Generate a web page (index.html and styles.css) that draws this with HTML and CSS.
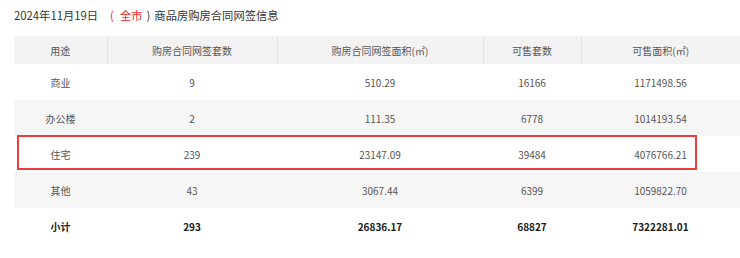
FILE: index.html
```html
<!DOCTYPE html>
<html lang="zh-CN">
<head>
<meta charset="utf-8">
<title>商品房购房合同网签信息</title>
<link rel="stylesheet" href="styles.css">
</head>
<body>
<div class="title">2024年11月19日<span class="paren-l red">(</span><span class="red">全市</span><span class="paren-r">)</span>商品房购房合同网签信息</div>
<div class="wrap">
<table class="grid">
<colgroup>
<col class="c1"><col class="c2"><col class="c3"><col class="c4"><col class="c5">
</colgroup>
<thead>
<tr><th>用途</th><th>购房合同网签套数</th><th>购房合同网签面积(㎡)</th><th>可售套数</th><th>可售面积(㎡)</th></tr>
</thead>
<tbody>
<tr><td>商业</td><td>9</td><td>510.29</td><td>16166</td><td>1171498.56</td></tr>
<tr class="alt"><td>办公楼</td><td>2</td><td>111.35</td><td>6778</td><td>1014193.54</td></tr>
<tr><td>住宅</td><td>239</td><td>23147.09</td><td>39484</td><td>4076766.21</td></tr>
<tr class="alt"><td>其他</td><td>43</td><td>3067.44</td><td>6399</td><td>1059822.70</td></tr>
<tr class="total"><td>小计</td><td>293</td><td>26836.17</td><td>68827</td><td>7322281.01</td></tr>
</tbody>
</table>
<div class="highlight"></div>
</div>
</body>
</html>
```
FILE: styles.css
```css
html, body {
  margin: 0;
  padding: 0;
  background: #ffffff;
}
body {
  font-family: "Noto Sans CJK SC", "Noto Sans", sans-serif;
  color: #333333;
}
.title {
  height: 30px;
  line-height: 30px;
  padding-left: 14px;
  font-size: 11.3px;
  color: #333333;
  white-space: nowrap;
}
.paren-l {
  margin-left: 12px;
  margin-right: 6px;
}
.paren-r {
  margin-left: 4px;
  margin-right: 4px;
}
.red {
  color: #f21c1c;
}
.wrap {
  position: relative;
  margin-top: 6px;
  margin-left: 14px;
  width: 726px;
}
.grid {
  width: 726px;
  table-layout: fixed;
  border-collapse: collapse;
  font-size: 10px;
  color: #555555;
}
.c1 { width: 93px; }
.c2 { width: 170px; }
.c3 { width: 206px; }
.c4 { width: 98px; }
.c5 { width: 159px; }
.grid th {
  height: 28px;
  padding: 0;
  font-weight: normal;
  background: #f3f3f3;
  border-left: 1px solid #e4e4e4;
  text-align: center;
}
.grid th:first-child {
  border-left: none;
}
.grid td {
  height: 36px;
  padding: 0;
  text-align: center;
}
.grid tr.alt td {
  background: #f6f6f6;
}
.grid tr.total td {
  font-weight: bold;
  color: #1a1a1a;
}
.highlight {
  position: absolute;
  left: 3px;
  top: 99px;
  width: 680px;
  height: 35px;
  box-sizing: border-box;
  border: 2px solid #f43b3b;
  pointer-events: none;
}
```
